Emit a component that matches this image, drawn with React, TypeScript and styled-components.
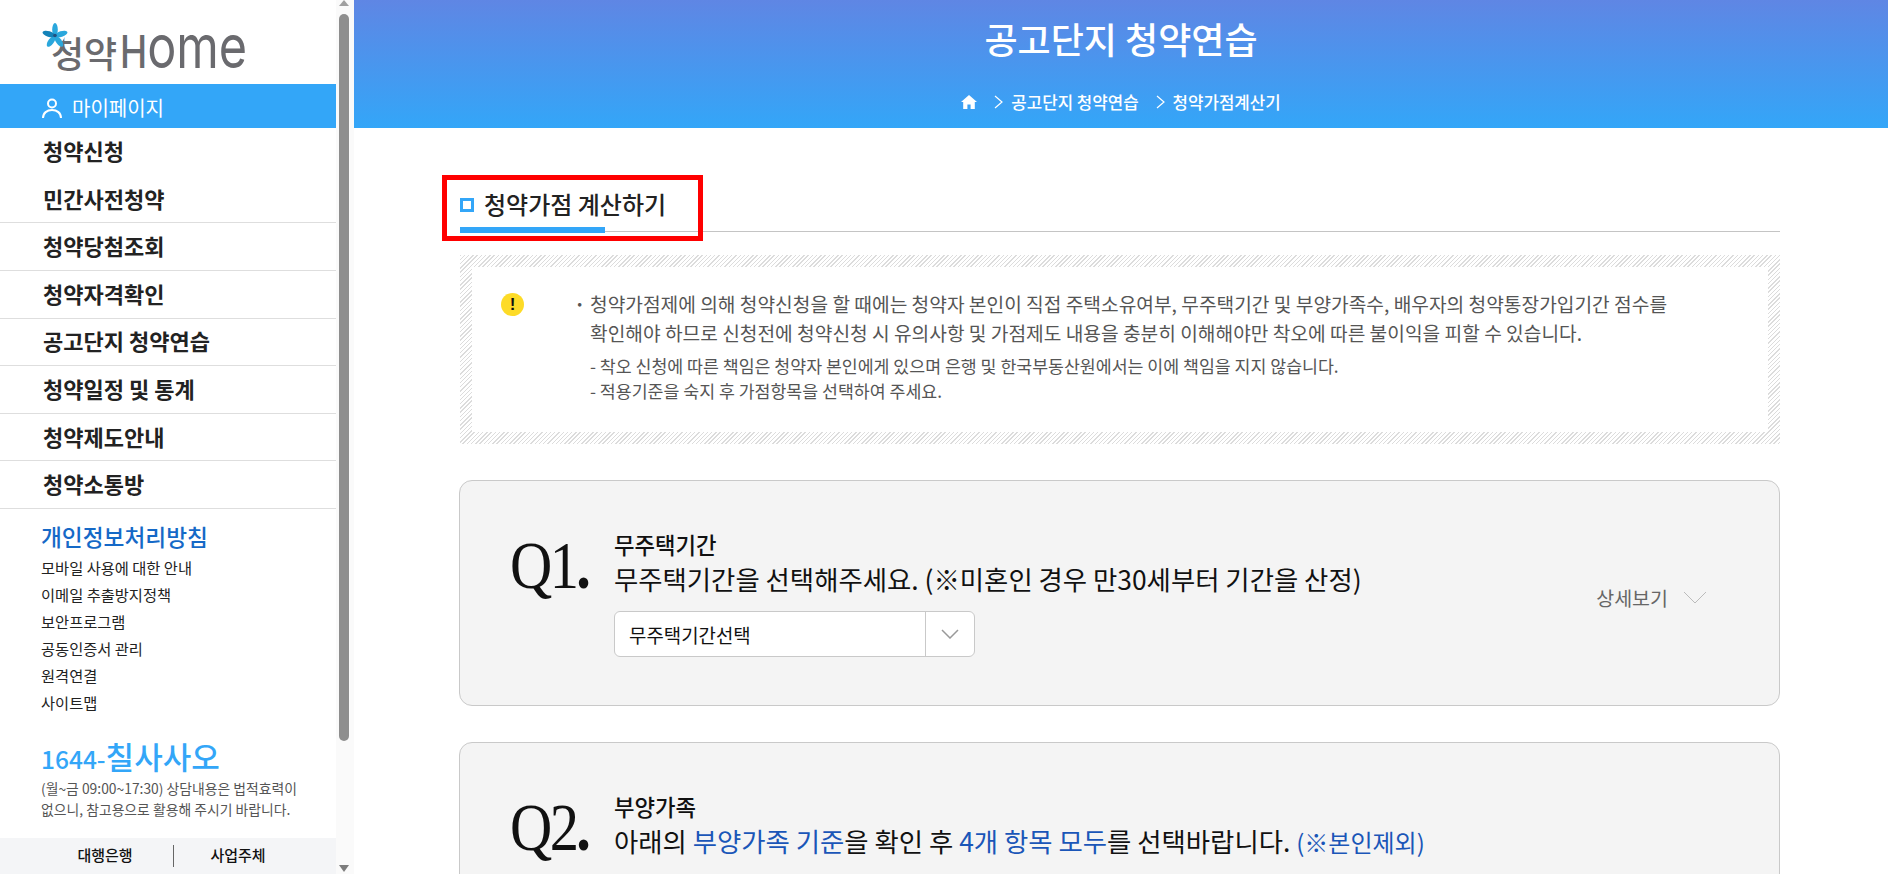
import React from 'react';
import styled, { createGlobalStyle } from 'styled-components';

const GlobalStyle = createGlobalStyle`
  html, body {
    margin: 0;
    height: 100%;
    overflow: hidden;
    background: #fff;
  }
  body {
    font-family: "Noto Sans CJK KR", "Noto Sans", sans-serif;
    color: #222;
  }
  * { box-sizing: border-box; }
`;

const Page = styled.div`
  display: flex;
  height: 874px;
  overflow: hidden;
`;

const Sidebar = styled.aside`
  width: 336px;
  flex: none;
  display: flex;
  flex-direction: column;
`;

const LogoBox = styled.div`
  position: relative;
  height: 84px;
  padding: 16px 0 0 51px;
`;

const LogoText = styled.div`
  display: flex;
  align-items: baseline;
  font-size: 36px;
  font-weight: 500;
  line-height: 60px;
  color: #6a6a6e;
  white-space: nowrap;
`;

// the logo's "ome" is as tall as its H, so two sizes squeezed to the logo's width
const LogoHome = styled.span`
  display: inline-block;
  margin-left: 3px;
  font-family: "Inter", sans-serif;
  font-weight: 400;
  font-size: 60px;
  line-height: 60px;
  transform: scaleX(0.81);
  transform-origin: left center;
`;

const LogoCap = styled.span`
  font-size: 45px;
  font-weight: 500;
`;

const LogoStar = styled.svg`
  position: absolute;
  left: 42px;
  top: 23px;
`;

const MyPage = styled.a`
  display: flex;
  align-items: center;
  gap: 10px;
  height: 44px;
  padding: 4px 0 0 42px;
  background: #33a6f8;
  color: #fff;
  font-size: 20px;
`;

const MenuRow = styled.a<{ $first?: boolean }>`
  display: flex;
  align-items: center;
  height: ${p => (p.$first ? 48 : 47.7)}px;
  padding: 0 0 3px 43px;
  border-bottom: ${p => (p.$first ? 'none' : '1px solid #dedede')};
  font-size: 22px;
  font-weight: 700;
  color: #222;
`;

const LinkBlock = styled.div`
  padding: 11px 0 0 41px;
`;

const PolicyLink = styled.div`
  font-size: 22.7px;
  font-weight: 500;
  line-height: 34px;
  color: #1569c7;
`;

const SubLink = styled.div`
  font-size: 15.3px;
  line-height: 27px;
  color: #222;
`;

const Phone = styled.div`
  margin-top: 20px;
  display: flex;
  align-items: baseline;
  color: #33a6f8;
  font-size: 24.5px;
  font-weight: 500;
  line-height: 39px;
`;

const PhoneWord = styled.span`
  font-size: 31px;
`;

const PhoneNote = styled.div`
  font-size: 13.85px;
  line-height: 21px;
  color: #555;
  white-space: nowrap;
`;

const BankBar = styled.div`
  margin-top: 18px;
  height: 36px;
  background: #f4f5f7;
  display: grid;
  grid-template-columns: 173px 1px 1fr;
  align-items: center;
  font-size: 15px;
  font-weight: 500;
  color: #111;
`;

const BankLink = styled.a<{ $left?: number; $right?: number }>`
  text-align: center;
  padding: 0 ${p => p.$right ?? 0}px 3px ${p => p.$left ?? 0}px;
`;

const BankDivider = styled.span`
  height: 22px;
  background: #666;
`;

const ScrollTrack = styled.div`
  width: 18px;
  flex: none;
  background: #fafafa;
  display: flex;
  flex-direction: column;
  align-items: center;
  padding: 0 3px 2px 0;
`;

const ScrollArrowUp = styled.div`
  flex: none;
  width: 0;
  height: 6px;
  border-left: 5.5px solid transparent;
  border-right: 5.5px solid transparent;
  border-bottom: 6px solid #a0a0a0;
`;

const ScrollThumb = styled.div`
  flex: none;
  width: 10px;
  height: 727px;
  margin-top: 8px;
  background: #8e8e8e;
  border-radius: 5px;
`;

const ScrollArrowDown = styled.div`
  margin-top: auto;
  flex: none;
  width: 0;
  height: 7px;
  border-left: 5.5px solid transparent;
  border-right: 5.5px solid transparent;
  border-top: 7px solid #7d7d7d;
`;

const Main = styled.main`
  flex: 1;
  min-width: 0;
`;

const Hero = styled.header`
  height: 128px;
  background: linear-gradient(180deg, #5f86e4 0%, #33a6f8 100%);
  color: #fff;
  text-align: center;
  padding-top: 13px;
`;

const HeroTitle = styled.h1`
  margin: 0;
  font-size: 36px;
  font-weight: 500;
  line-height: 50px;
`;

const Crumbs = styled.nav`
  margin-top: 27px;
  display: flex;
  justify-content: center;
  align-items: center;
  font-size: 16.8px;
  font-weight: 500;
  line-height: 24px;
`;

const CrumbItem = styled.span`
  display: inline-flex;
  align-items: center;
  gap: 8px;
  margin-left: 17px;
`;

const Content = styled.div`
  padding: 48px 108px 0 106px;
`;

const SectionHead = styled.div`
  position: relative;
  height: 56px;
  border-bottom: 1px solid #c4c4c4;
  display: flex;
  align-items: center;
  gap: 10px;
  padding-bottom: 1px;
`;

const TitleSquare = styled.span`
  width: 14px;
  height: 14px;
  margin-top: 3px;
  border: 3.5px solid #33a6f8;
`;

const SectionTitle = styled.h2`
  margin: 0;
  font-size: 24px;
  font-weight: 500;
  color: #222;
`;

const TitleBar = styled.span`
  position: absolute;
  left: 0;
  bottom: -2px;
  width: 145px;
  height: 6px;
  background: #33a6f8;
`;

const RedMark = styled.span`
  position: absolute;
  left: -18px;
  top: -1px;
  width: 261px;
  height: 66px;
  border: 5px solid #f00;
`;

const Notice = styled.section`
  margin-top: 23px;
  height: 189px;
  padding: 12px;
  background: repeating-linear-gradient(135deg, #dcdcdc 0 1px, #fff 1px 3px);
`;

const NoticeInner = styled.div`
  height: 100%;
  background: #fff;
  display: flex;
  padding: 23px 0 0 29px;
`;

const AlertDot = styled.span`
  flex: none;
  width: 23px;
  height: 23px;
  margin-top: 3px;
  border-radius: 50%;
  background: #fddb27;
  color: #111;
  display: flex;
  align-items: center;
  justify-content: center;
  font-size: 17px;
  font-weight: 900;
  font-family: "Liberation Sans", sans-serif;
`;

const NoticeBody = styled.div`
  margin-left: 53px;
  color: #555;
`;

const NoticeLead = styled.p`
  margin: 0 0 5px;
  padding-left: 13px;
  position: relative;
  font-size: 19.2px;
  line-height: 29px;
  white-space: nowrap;

  &::before {
    content: '·';
    position: absolute;
    left: -3px;
    top: 0;
    font-weight: 700;
  }
`;

const NoticeSub = styled.p`
  margin: 0 0 0 13px;
  font-size: 17.3px;
  line-height: 25px;
  white-space: nowrap;
`;

const QuestionCard = styled.section`
  margin: 36px 0 0 -1px;
  height: 226px;
  background: #f4f4f4;
  border: 1px solid #c9c9c9;
  border-radius: 13px;
  display: flex;
  padding: 47px 72px 0 50px;
`;

const QMark = styled.div`
  flex: none;
  width: 104px;
  height: 74px;
  font-family: "Liberation Serif", serif;
  font-size: 68px;
  line-height: 74px;
  color: #111;
  letter-spacing: -3px;
  white-space: nowrap;
  transform: scaleX(0.86);
  transform-origin: left center;
`;

const QDot = styled.span`
  font-weight: 700;
`;

const QBody = styled.div`
  flex: 1;
  min-width: 0;
  padding-top: 1px;
`;

const QLabel = styled.div`
  font-size: 22.3px;
  font-weight: 500;
  line-height: 30px;
  color: #111;
`;

const QText = styled.div`
  font-size: 26.4px;
  line-height: 40px;
  color: #111;
  white-space: nowrap;
`;

const Accent = styled.span<{ $small?: boolean }>`
  color: #1a56b8;
  font-size: ${p => (p.$small ? '24px' : 'inherit')};
`;

const SelectBox = styled.div`
  margin-top: 12px;
  width: 361px;
  height: 46px;
  background: #fff;
  border: 1px solid #c9c9c9;
  border-radius: 6px;
  display: flex;
  align-items: center;
  justify-content: space-between;
  padding-left: 14px;
  font-size: 18.9px;
  color: #111;
`;

const SelectArrow = styled.span`
  width: 49px;
  height: 100%;
  border-left: 1px solid #c9c9c9;
  display: flex;
  align-items: center;
  justify-content: center;
`;

const DetailToggle = styled.div`
  flex: none;
  margin-top: 55px;
  align-self: flex-start;
  display: flex;
  align-items: center;
  gap: 15px;
  font-size: 19.5px;
  color: #666;
`;

const menus = [
  '청약신청',
  '민간사전청약',
  '청약당첨조회',
  '청약자격확인',
  '공고단지 청약연습',
  '청약일정 및 통계',
  '청약제도안내',
  '청약소통방',
];

const subLinks = ['모바일 사용에 대한 안내', '이메일 추출방지정책', '보안프로그램', '공동인증서 관리', '원격연결', '사이트맵'];

const Chevron: React.FC<{ w: number; h: number; color: string; sw?: number }> = ({ w, h, color, sw = 1.5 }) => (
  <svg width={w} height={h} viewBox={`0 0 ${w} ${h}`} fill="none">
    <polyline points={`1,1 ${w / 2},${h - 1} ${w - 1},1`} stroke={color} strokeWidth={sw} />
  </svg>
);

const CrumbArrow = () => (
  <svg width="9" height="14" viewBox="0 0 9 14" fill="none">
    <polyline points="1,1 8,7 1,13" stroke="#fff" strokeWidth="1.2" />
  </svg>
);

const App: React.FC = () => {
  return (
    <Page>
      <GlobalStyle />
      <Sidebar>
        <LogoBox>
          <LogoText>
            청약
            <LogoHome>
              <LogoCap>H</LogoCap>ome
            </LogoHome>
          </LogoText>
          <LogoStar width="26" height="26" viewBox="0 0 26 26">
            <circle cx="12" cy="11" r="11" fill="#fff" />
            {[0, 72, 144, 216, 288].map(r => (
              <ellipse key={r} cx="13" cy="6.5" rx="2.8" ry="6.5" fill={r === 288 ? '#1482b8' : '#2aa7dc'} transform={`rotate(${r} 13 13)`} />
            ))}
            <circle cx="13" cy="12.5" r="1.8" fill="#23507f" />
          </LogoStar>
        </LogoBox>
        <MyPage>
          <svg width="20" height="20" viewBox="0 0 20 20" fill="none" stroke="#fff" strokeWidth="2">
            <circle cx="10" cy="5.5" r="4" />
            <path d="M1 20c0-5 4-8 9-8s9 3 9 8" />
          </svg>
          마이페이지
        </MyPage>
        {menus.map((m, i) => (
          <MenuRow key={m} $first={i === 0}>
            {m}
          </MenuRow>
        ))}
        <LinkBlock>
          <PolicyLink>개인정보처리방침</PolicyLink>
          {subLinks.map(s => (
            <SubLink key={s}>{s}</SubLink>
          ))}
          <Phone>
            1644-<PhoneWord>칠사사오</PhoneWord>
          </Phone>
          <PhoneNote>(월~금 09:00~17:30) 상담내용은 법적효력이</PhoneNote>
          <PhoneNote>없으니, 참고용으로 활용해 주시기 바랍니다.</PhoneNote>
        </LinkBlock>
        <BankBar>
          <BankLink $left={37}>대행은행</BankLink>
          <BankDivider />
          <BankLink $right={34}>사업주체</BankLink>
        </BankBar>
      </Sidebar>
      <ScrollTrack>
        <ScrollArrowUp />
        <ScrollThumb />
        <ScrollArrowDown />
      </ScrollTrack>
      <Main>
        <Hero>
          <HeroTitle>공고단지 청약연습</HeroTitle>
          <Crumbs>
            <svg width="16" height="14" viewBox="0 0 16 14" fill="#fff">
              <path d="M8 0 0 7h2.2v7h4.2V9.5h3.2V14h4.2V7H16z" />
            </svg>
            <CrumbItem>
              <CrumbArrow />
              공고단지 청약연습
            </CrumbItem>
            <CrumbItem>
              <CrumbArrow />
              청약가점계산기
            </CrumbItem>
          </Crumbs>
        </Hero>
        <Content>
          <SectionHead>
            <TitleSquare />
            <SectionTitle>청약가점 계산하기</SectionTitle>
            <TitleBar />
            <RedMark />
          </SectionHead>
          <Notice>
            <NoticeInner>
              <AlertDot>!</AlertDot>
              <NoticeBody>
                <NoticeLead>
                  청약가점제에 의해 청약신청을 할 때에는 청약자 본인이 직접 주택소유여부, 무주택기간 및 부양가족수, 배우자의 청약통장가입기간 점수를
                  <br />
                  확인해야 하므로 신청전에 청약신청 시 유의사항 및 가점제도 내용을 충분히 이해해야만 착오에 따른 불이익을 피할 수 있습니다.
                </NoticeLead>
                <NoticeSub>- 착오 신청에 따른 책임은 청약자 본인에게 있으며 은행 및 한국부동산원에서는 이에 책임을 지지 않습니다.</NoticeSub>
                <NoticeSub>- 적용기준을 숙지 후 가점항목을 선택하여 주세요.</NoticeSub>
              </NoticeBody>
            </NoticeInner>
          </Notice>
          <QuestionCard>
            <QMark>
              Q1<QDot>.</QDot>
            </QMark>
            <QBody>
              <QLabel>무주택기간</QLabel>
              <QText>무주택기간을 선택해주세요. (※미혼인 경우 만30세부터 기간을 산정)</QText>
              <SelectBox>
                무주택기간선택
                <SelectArrow>
                  <Chevron w={18} h={10} color="#999" />
                </SelectArrow>
              </SelectBox>
            </QBody>
            <DetailToggle>
              상세보기
              <Chevron w={24} h={13} color="#bbb" sw={1} />
            </DetailToggle>
          </QuestionCard>
          <QuestionCard>
            <QMark>
              Q2<QDot>.</QDot>
            </QMark>
            <QBody>
              <QLabel>부양가족</QLabel>
              <QText>
                아래의 <Accent>부양가족 기준</Accent>을 확인 후 <Accent>4개 항목 모두</Accent>를 선택바랍니다. <Accent $small>(※본인제외)</Accent>
              </QText>
            </QBody>
          </QuestionCard>
        </Content>
      </Main>
    </Page>
  );
};

export default App;
